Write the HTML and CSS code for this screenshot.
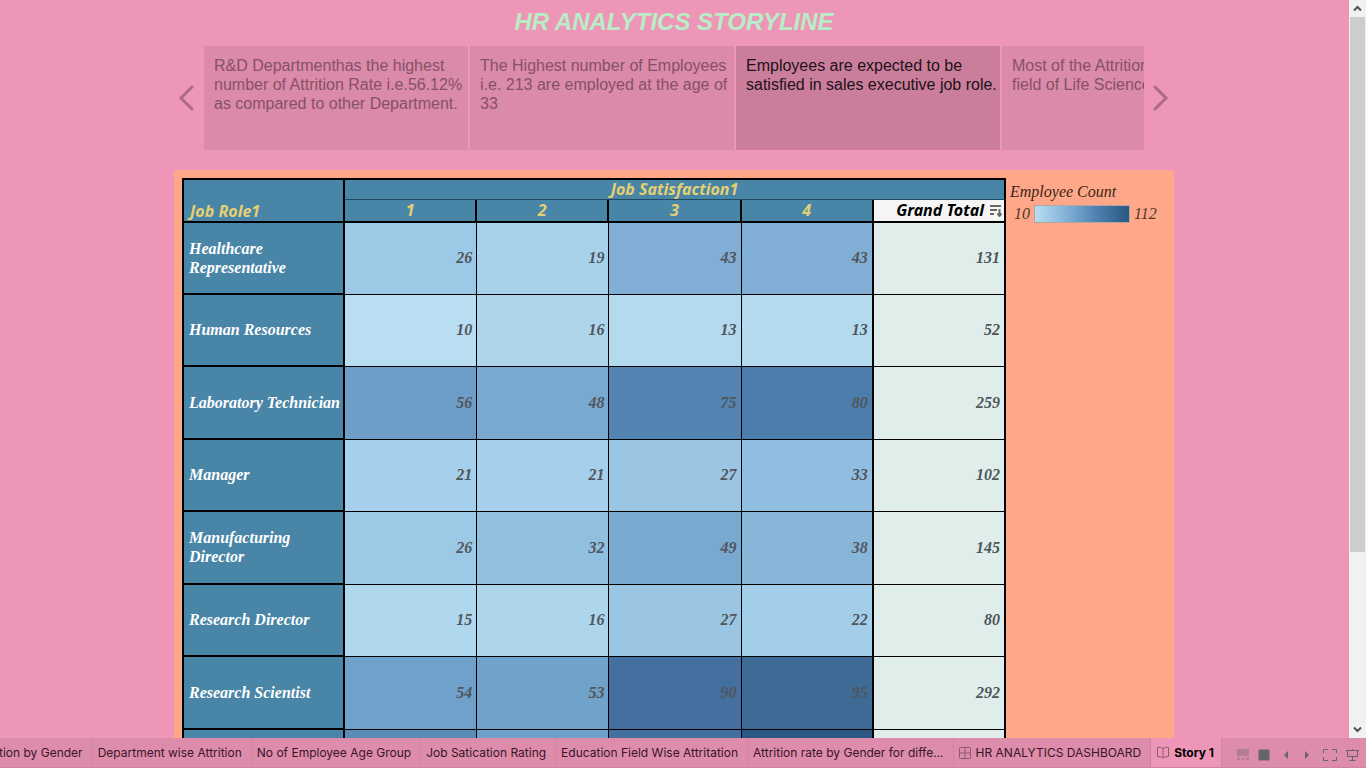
FILE: index.html
```html
<!DOCTYPE html>
<html lang="en">
<head>
<meta charset="utf-8">
<title>HR Analytics Storyline</title>
<link rel="stylesheet" href="styles.css">
</head>
<body>
<div class="viewport">
  <main class="story">
    <h1 class="title">HR ANALYTICS STORYLINE</h1>
    <nav class="navigator" aria-label="Story points">
      <button class="arrow" aria-label="Previous"><svg width="16" height="26" viewBox="0 0 16 26"><path d="M14 2 3 13l11 11"/></svg></button>
      <div class="points">
        <button class="point">R&amp;D Departmenthas the highest number of Attrition Rate i.e.56.12% as compared to other Department.</button>
        <button class="point">The Highest number of Employees i.e. 213 are employed at the age of 33</button>
        <button class="point current">Employees are expected to be satisfied in sales executive job role.</button>
        <button class="point">Most of the Attrition<br>field of Life Science</button>
      </div>
      <button class="arrow" aria-label="Next"><svg width="16" height="26" viewBox="0 0 16 26"><path d="m2 2 11 11L2 24"/></svg></button>
    </nav>
    <section class="sheet">
      <table class="heatmap">
        <colgroup><col class="role-col"><col><col><col><col><col></colgroup>
        <thead>
          <tr><th class="corner" rowspan="2" scope="col">Job Role1</th><th class="group" colspan="5" scope="colgroup">Job Satisfaction1</th></tr>
          <tr class="levels"><th scope="col">1</th><th scope="col">2</th><th scope="col">3</th><th scope="col">4</th><th class="total-head" scope="col"><div><span>Grand Total</span><svg width="13" height="13" viewBox="0 0 13 13"><path d="M0 2h11M0 6h7M0 10h4M9.500 5v7M7.500 9.500l2 2.500 2-2.500"/></svg></div></th></tr>
        </thead>
        <tbody>
          <tr><th scope="row">Healthcare Representative</th><td style="background:#9cc9e6">26</td><td style="background:#a8d2eb">19</td><td style="background:#80aed5">43</td><td style="background:#80aed5">43</td><td>131</td></tr>
          <tr><th scope="row">Human Resources</th><td style="background:#b9ddf1">10</td><td style="background:#add5ec">16</td><td style="background:#b3daef">13</td><td style="background:#b3daef">13</td><td>52</td></tr>
          <tr><th scope="row">Laboratory Technician</th><td style="background:#6e9dc8">56</td><td style="background:#7aa9d0">48</td><td style="background:#5484b1">75</td><td style="background:#4c7dac">80</td><td>259</td></tr>
          <tr><th scope="row">Manager</th><td style="background:#a5cfeb">21</td><td style="background:#a5cfeb">21</td><td style="background:#9ac6e4">27</td><td style="background:#90bee0">33</td><td>102</td></tr>
          <tr><th scope="row">Manufacturing Director</th><td style="background:#9cc9e6">26</td><td style="background:#91bfe0">32</td><td style="background:#79a8d0">49</td><td style="background:#88b6d9">38</td><td>145</td></tr>
          <tr><th scope="row">Research Director</th><td style="background:#afd7ed">15</td><td style="background:#add5ec">16</td><td style="background:#9ac6e4">27</td><td style="background:#a3ceea">22</td><td>80</td></tr>
          <tr><th scope="row">Research Scientist</th><td style="background:#70a1ca">54</td><td style="background:#71a2ca">53</td><td style="background:#4470a0">90</td><td style="background:#3d6b96">95</td><td>292</td></tr>
          <tr><th scope="row"></th><td style="background:#5b8cb8"></td><td style="background:#6fa0c9"></td><td style="background:#44709f"></td><td style="background:#2a5783"></td><td></td></tr>
        </tbody>
      </table>
      <aside class="legend">
        <div class="legend-title">Employee Count</div>
        <div class="legend-scale"><span>10</span><div class="ramp"></div><span>112</span></div>
      </aside>
    </section>
  </main>
  <div class="scrollbar">
    <button aria-label="Scroll up"><svg width="9" height="7" viewBox="0 0 9 7"><path d="m1 5.500 3.500-3.500L8 5.500"/></svg></button>
    <div class="track"><div class="thumb"></div></div>
    <button aria-label="Scroll down"><svg width="9" height="7" viewBox="0 0 9 7"><path d="m1 1.500 3.500 3.500L8 1.500"/></svg></button>
  </div>
</div>
<footer class="bar">
  <nav class="tabs" aria-label="Sheets">
    <a href="#">Attrition by Gender</a>
    <a href="#">Department wise Attrition</a>
    <a href="#">No of Employee Age Group</a>
    <a href="#">Job Satication Rating</a>
    <a href="#">Education Field Wise Attritation</a>
    <a href="#">Attrition rate by Gender for diffe...</a>
    <a href="#"><svg width="12" height="12" viewBox="0 0 12 12"><path d="M1.500.5h9q1 0 1 1v9q0 1-1 1h-9q-1 0-1-1v-9q0-1 1-1zM6 .5v11M.5 6h11"/></svg>HR ANALYTICS DASHBOARD</a>
    <a href="#" class="active"><svg width="12" height="13" viewBox="0 0 12 13"><path d="M.5 1.500q3-1 5.500 1 2.500-2 5.500-1v9q-3-.5-5.500 1.500-2.500-2-5.500-1.500zM6 2.500V12"/></svg>Story 1</a>
  </nav>
  <div class="tools">
    <button class="faded" aria-label="Filmstrip"><svg width="12" height="12" viewBox="0 0 12 12"><path class="solid" d="M0 0h12v7H0zM0 8.500h3V11H0zM4.500 8.500h3V11h-3zM9 8.500h3V11H9z"/></svg></button>
    <button aria-label="Sheet sorter"><svg width="12" height="12" viewBox="0 0 12 12"><path class="solid" d="M.5.5h11v11H.5z"/></svg></button>
    <button aria-label="Previous sheet"><svg width="12" height="12" viewBox="0 0 12 12"><path class="solid" d="M8 2v8L4 6z"/></svg></button>
    <button aria-label="Next sheet"><svg width="12" height="12" viewBox="0 0 12 12"><path class="solid" d="M4 2v8l4-4z"/></svg></button>
    <button aria-label="Full screen"><svg width="14" height="12" viewBox="0 0 14 12"><path d="M.5 4V.5H5M9 .5h4.500V4M.5 8v3.500H5M9 11.500h4.500V8"/></svg></button>
    <button aria-label="Presentation mode"><svg width="13" height="12" viewBox="0 0 13 12"><path d="M0 1.500h13M1.500 2v5.500h10V2M6.500 0v1M6.500 8v3M3.500 11.500h6"/></svg></button>
  </div>
</footer>
</body>
</html>
```
FILE: styles.css
```css
* { box-sizing: border-box; }

body {
  margin: 0;
  height: 100vh;
  display: flex;
  flex-direction: column;
  overflow: hidden;
  background: #ee96b8;
  font-family: "Liberation Sans", Arial, sans-serif;
}

button { border: 0; padding: 0; background: none; font: inherit; color: inherit; }
svg { display: block; flex: none; fill: none; stroke: #666; }

.viewport { flex: 1; min-height: 0; display: flex; }

.story {
  flex: 1;
  min-width: 0;
  overflow: hidden;
  padding-right: 1px;
  display: flex;
  flex-direction: column;
  align-items: center;
}

.title {
  margin: 8px 0 10px;
  font-size: 24px;
  line-height: 28px;
  font-style: italic;
  color: #b8edc5;
}

.navigator { flex: none; width: 100%; max-width: 1000px; display: flex; height: 104px; }
.arrow { width: 30px; display: flex; align-items: center; justify-content: center; }
.arrow:first-child { padding-right: 6px; }
.arrow:last-child { padding-left: 4px; }
.arrow svg { stroke: #ae6a87; stroke-width: 3; stroke-linecap: round; }
.points { flex: 1; min-width: 0; display: flex; gap: 2px; overflow: hidden; }
.point {
  flex: 0 0 264px;
  display: flex;
  align-items: flex-start;
  padding: 10px 0 10px 10px;
  background: #dc8aa9;
  color: #855167;
  font-size: 16px;
  line-height: 19px;
  text-align: left;
}
.current { background: #cb7e9c; color: #1c1217; }

.sheet {
  flex: none;
  width: 100%;
  max-width: 1000px;
  margin-top: 20px;
  padding: 8px;
  display: flex;
  align-items: flex-start;
  background: #ffa889;
}

.heatmap {
  flex: 0 0 824px;
  width: 824px;
  table-layout: fixed;
  border-collapse: separate;
  border-spacing: 0;
  border-top: 2px solid #000;
  font-family: "Liberation Serif", "Times New Roman", serif;
  font-size: 16px;
  line-height: 19px;
  font-style: italic;
  font-weight: bold;
}
.role-col { width: 163px; }
.heatmap th { background: #4885a6; padding: 0; }
.heatmap thead th {
  height: 20px;
  font-family: "Noto Sans", sans-serif;
  font-size: 16px;
  line-height: 19px;
  color: #e5cf73;
}
.heatmap thead .corner {
  padding-left: 6px;
  text-align: left;
  vertical-align: bottom;
  border: solid #000;
  border-width: 0 2px 2px;
}
.heatmap thead .group { border-bottom: 1px solid #204a60; border-right: 2px solid #000; }
.heatmap .levels th { height: 23px; border-right: 2px solid #000; border-bottom: 2px solid #000; }
.heatmap .levels .total-head { background: #f5f5f5; color: #000; }
.total-head div { display: flex; align-items: center; justify-content: flex-end; gap: 6px; padding-right: 1px; }
.total-head svg { stroke-width: 2; }

.heatmap tbody tr { height: 73px; }
.heatmap tbody tr:first-child, .heatmap tbody tr:nth-child(even) { height: 72px; }
.heatmap tbody th {
  padding: 0 0 1px 5px;
  text-align: left;
  color: #fff;
  border: solid #000;
  border-width: 0 2px 2px;
}
.heatmap td {
  padding: 0 4px 2px;
  text-align: right;
  color: #50565c;
  border-right: 1px solid #000;
  border-bottom: 1px solid #000;
}
.heatmap td:nth-last-child(-n+2) { border-right-width: 2px; }
.heatmap td:last-child { background: #dfeeea; }

.legend {
  padding: 4px 0 0 4px;
  font-family: "Liberation Serif", "Times New Roman", serif;
  font-size: 16px;
  line-height: 19px;
  font-style: italic;
  color: #533527;
}
.legend-title { color: #3b2318; }
.legend-scale { display: flex; align-items: center; gap: 4px; padding: 3px 0 0 4px; }
.ramp {
  width: 96px;
  height: 18px;
  border: 1px solid #b0a8a0;
  background: linear-gradient(90deg, #b9ddf1, #80aed5 35%, #4c7dac 68%, #2a5783);
}

.scrollbar {
  flex: 0 0 17px;
  display: flex;
  flex-direction: column;
  background: #f1f1f1;
}
.scrollbar button { height: 17px; display: flex; align-items: center; justify-content: center; }
.scrollbar svg { stroke: #505050; stroke-width: 2; }
.track { flex: 1; padding: 0 1px; }
.thumb { height: 76%; background: #cdcdcd; }

.bar { flex: 0 0 30px; display: flex; background: #dd8cab; border-bottom: 1px solid #cf83a0; }
.tabs { flex: 1; min-width: 0; display: flex; justify-content: flex-end; overflow: hidden; }
.tabs a {
  flex: none;
  display: flex;
  align-items: center;
  gap: 5px;
  padding: 0 9px 0 5px;
  border-left: 1px solid #d2849f;
  font-family: Inter, sans-serif;
  font-size: 12px;
  color: #3a1526;
  text-decoration: none;
  white-space: nowrap;
}
.tabs svg { stroke: #8f5a70; }
.tabs .active { padding: 0 7px 0 6px; background: #ee96b8; color: #000; font-weight: bold; }
.tools { flex: 0 0 145px; display: flex; align-items: center; justify-content: space-between; padding: 5px 7px 0 15px; border-left: 1px solid #d2849f; }
.solid { fill: #666; stroke: none; }
.faded { opacity: .35; }
```
